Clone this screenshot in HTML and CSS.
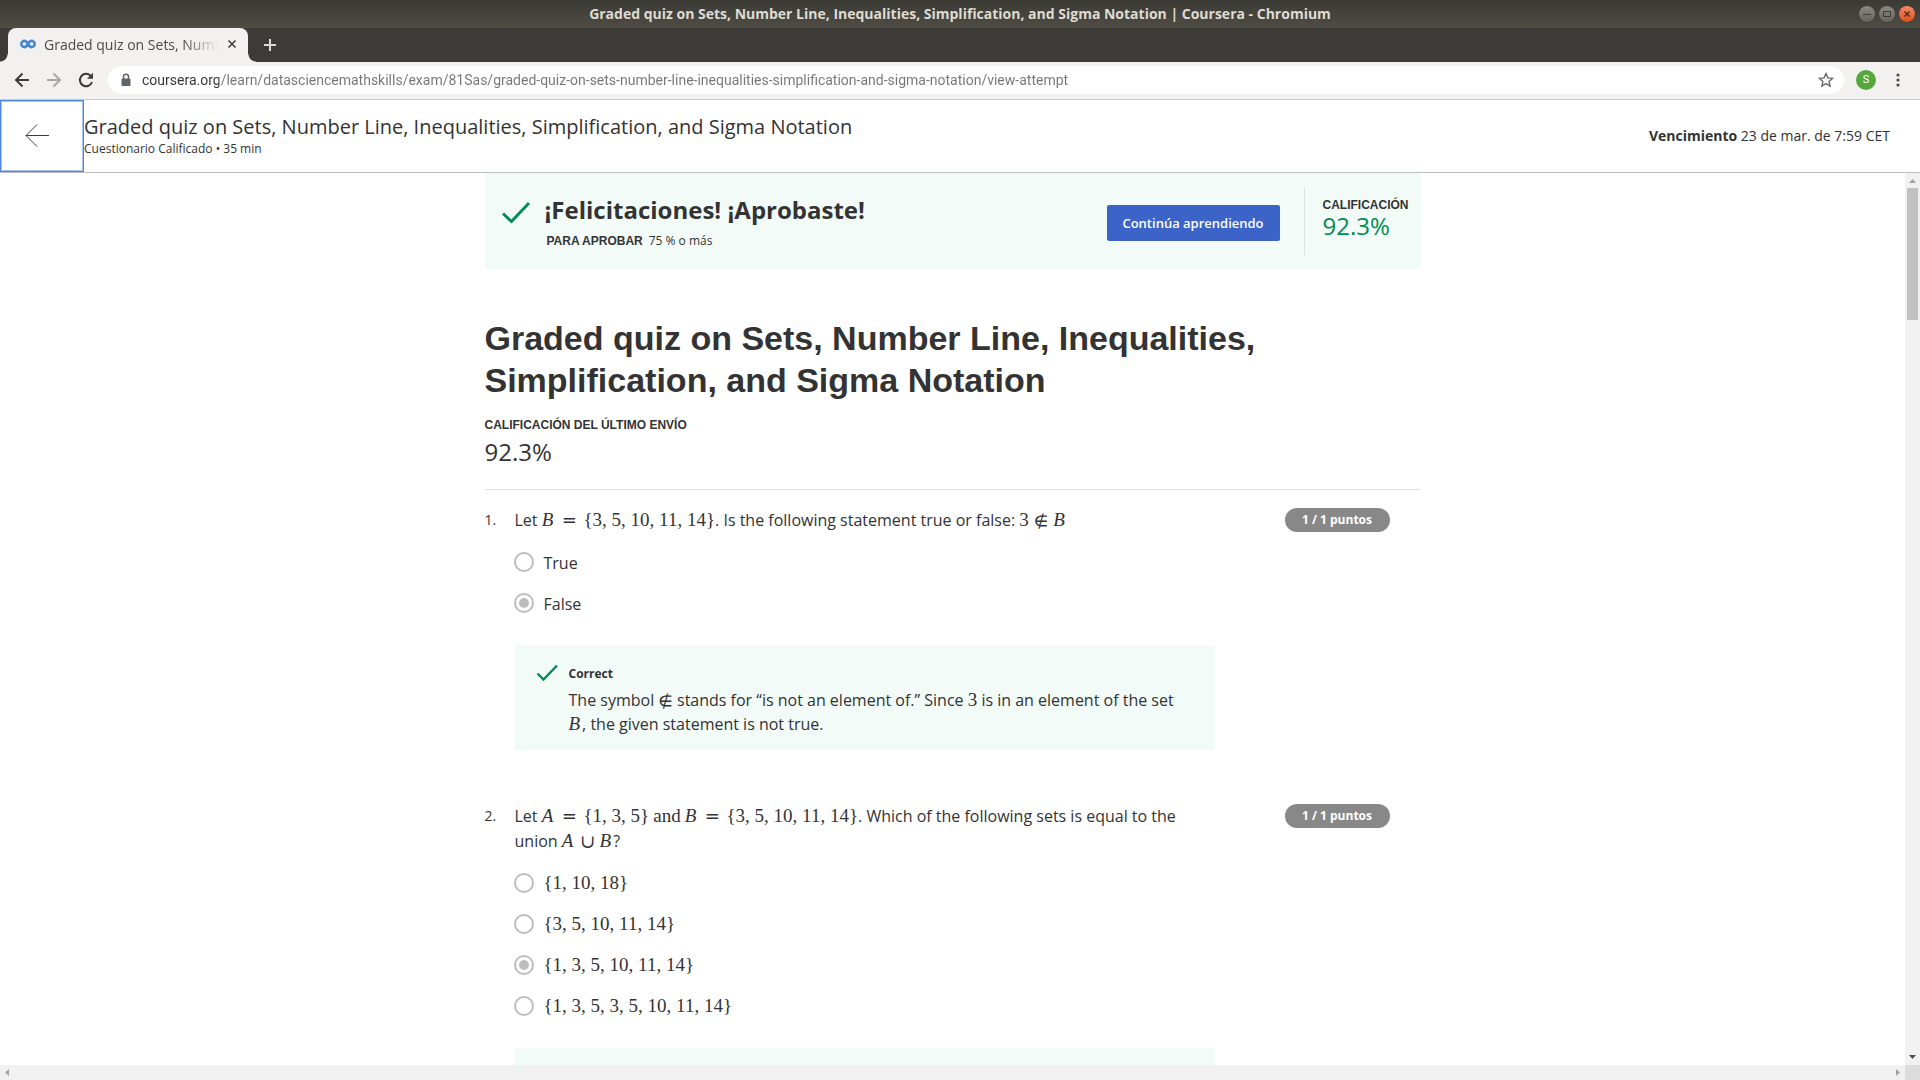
FILE: index.html
```html
<!DOCTYPE html>
<html lang="es">
<head>
<meta charset="utf-8">
<title>Graded quiz on Sets, Number Line, Inequalities, Simplification, and Sigma Notation | Coursera</title>
<link rel="stylesheet" href="styles.css">
</head>
<body>
<div class="titlebar">
  <span class="window-title">Graded quiz on Sets, Number Line, Inequalities, Simplification, and Sigma Notation | Coursera - Chromium</span>
  <div class="window-buttons">
    <button class="wbtn" aria-label="Minimize"><svg width="16" height="16" viewBox="0 0 16 16"><path d="M4 8.5h8" stroke="#3c3b37" fill="none"/></svg></button>
    <button class="wbtn" aria-label="Maximize"><svg width="16" height="16" viewBox="0 0 16 16"><path d="M4.500 5.500h7v5h-7z" stroke="#3c3b37" fill="none"/></svg></button>
    <button class="wbtn wbtn-close" aria-label="Close"><svg width="16" height="16" viewBox="0 0 16 16"><path d="M5.500 5.500l5 5m0-5l-5 5" stroke="#4a2a1a" stroke-width="1.400" fill="none"/></svg></button>
  </div>
</div>
<div class="tabstrip">
  <div class="tab">
    <svg class="favicon" width="16" height="16" viewBox="0 0 16 16" fill="none" stroke="#4a86cf" stroke-width="2.600"><path d="M8 8C6.900 6 5.800 4.900 4.400 4.900a3.100 3.100 0 0 0 0 6.200C5.800 11.100 6.900 10 8 8s2.200-3.100 3.600-3.100a3.100 3.100 0 0 1 0 6.200C10.200 11.100 9.100 10 8 8z"/></svg>
    <span class="tab-title">Graded quiz on Sets, Number Line</span>
    <button class="tab-close" aria-label="Close tab"><svg width="12" height="12" viewBox="0 0 12 12"><path d="M2.500 2.500l7 7m0-7l-7 7" stroke="#3c4043" stroke-width="1.600" fill="none"/></svg></button>
  </div>
  <button class="new-tab" aria-label="New tab"><svg width="14" height="14" viewBox="0 0 14 14"><path d="M7 1v12M1 7h12" stroke="#dfdbd2" stroke-width="2" fill="none"/></svg></button>
</div>
<div class="toolbar">
  <button class="nav" aria-label="Back"><svg width="16" height="16" viewBox="0 0 16 16" fill="none" stroke="#3c3c3c" stroke-width="2"><path d="M15 8H2.500M8.500 1.500L2 8l6.500 6.500"/></svg></button>
  <button class="nav" aria-label="Forward"><svg width="16" height="16" viewBox="0 0 16 16" fill="none" stroke="#a9a8a6" stroke-width="2"><path d="M1 8h12.500M7.500 1.500L14 8l-6.500 6.500"/></svg></button>
  <button class="nav" aria-label="Reload"><svg width="16" height="16" viewBox="0 0 16 16" fill="none" stroke="#3c3c3c" stroke-width="2"><path d="M14 10a6.200 6.200 0 1 1-1.500-6.400L14 5"/><path d="M15 .8v6H9z" fill="#3c3c3c" stroke="none"/></svg></button>
  <div class="omnibox">
    <svg width="12" height="14" viewBox="0 0 12 14"><path d="M3.500 6V3.800a2.500 2.500 0 0 1 5 0V6" stroke="#5f6368" stroke-width="1.500" fill="none"/><rect x="1.500" y="5.500" width="9" height="7.500" rx="1" fill="#5f6368"/></svg>
    <input class="url" type="text" aria-label="Address" value="coursera.org/learn/datasciencemathskills/exam/81Sas/graded-quiz-on-sets-number-line-inequalities-simplification-and-sigma-notation/view-attempt">
    <svg width="16" height="16" viewBox="0 0 16 16"><path d="M8 1.600l1.900 4.300 4.700.4-3.500 3.100 1 4.600L8 11.600 3.900 14l1-4.600L1.400 6.300l4.700-.4z" stroke="#6b6b6b" stroke-width="1.400" fill="none"/></svg>
  </div>
  <button class="avatar" aria-label="Profile">S</button>
  <button class="menu" aria-label="Menu"><svg width="4" height="16" viewBox="0 0 4 16" fill="#4a4a4a"><circle cx="2" cy="3" r="1.600"/><circle cx="2" cy="8" r="1.600"/><circle cx="2" cy="13" r="1.600"/></svg></button>
</div>
<header class="quiz-header">
  <button class="back" aria-label="Volver"><svg width="24" height="24" viewBox="0 0 24 24" fill="none" stroke="#3a3a48" stroke-width="1"><path d="M24 11.500H1M12 .5L1 11.500l11 11"/></svg></button>
  <div class="quiz-name">
    <div class="quiz-title">Graded quiz on Sets, Number Line, Inequalities, Simplification, and Sigma Notation</div>
    <div class="quiz-sub">Cuestionario Calificado • 35 min</div>
  </div>
  <div class="due"><b>Vencimiento</b> 23 de mar. de 7:59 CET</div>
</header>
<div class="scroller">
  <main class="view">
    <div class="page">
      <section class="banner">
        <svg class="banner-check" width="30" height="24" viewBox="0 0 30 24" fill="none" stroke="#008c53" stroke-width="3"><path d="M2 12.500l8.500 8L28 2"/></svg>
        <div class="banner-text">
          <div class="congrats">¡Felicitaciones! ¡Aprobaste!</div>
          <div class="to-pass"><span class="caps">PARA APROBAR</span><span>75 % o más</span></div>
        </div>
        <button class="continue">Continúa aprendiendo</button>
        <div class="grade"><div class="caps">CALIFICACIÓN</div><div class="score pass">92.3%</div></div>
      </section>
      <h1>Graded quiz on Sets, Number Line, Inequalities, Simplification, and Sigma Notation</h1>
      <div class="caps">CALIFICACIÓN DEL ÚLTIMO ENVÍO</div>
      <div class="score last">92.3%</div>
      <section class="question first">
        <div class="num">1.</div>
        <div class="body">
          <p class="prompt">Let <span class="m"><i>B</i><span class="rel">=</span>{3, 5, 10, 11, 14}</span>. Is the following statement true or false: <span class="m">3<span class="sym">∉</span><i>B</i></span></p>
          <label class="option"><input type="radio" name="q1" disabled><span class="txt">True</span></label>
          <label class="option"><input type="radio" name="q1" disabled checked><span class="txt">False</span></label>
          <div class="feedback">
            <svg width="22" height="18" viewBox="0 0 22 18" fill="none" stroke="#008c53" stroke-width="2.400"><path d="M1.500 9.500l6 6L21 1.500"/></svg>
            <div>
              <div class="verdict">Correct</div>
              <p class="why">The symbol <span class="m"><span class="sym lone">∉</span></span> stands for “is not an element of.” Since <span class="m">3</span> is in an element of the set <span class="m"><i>B</i></span>, the given statement is not true.</p>
            </div>
          </div>
        </div>
        <div class="points">1 / 1 puntos</div>
      </section>
      <section class="question">
        <div class="num">2.</div>
        <div class="body">
          <p class="prompt">Let <span class="m"><i>A</i><span class="rel">=</span>{1, 3, 5}<span class="word">and</span><i>B</i><span class="rel">=</span>{3, 5, 10, 11, 14}</span>. Which of the following sets is equal to the union <span class="m"><i>A</i><span class="sym">∪</span><i>B</i></span>?</p>
          <label class="option"><input type="radio" name="q2" disabled><span class="m">{1, 10, 18}</span></label>
          <label class="option"><input type="radio" name="q2" disabled><span class="m">{3, 5, 10, 11, 14}</span></label>
          <label class="option"><input type="radio" name="q2" disabled checked><span class="m">{1, 3, 5, 10, 11, 14}</span></label>
          <label class="option"><input type="radio" name="q2" disabled><span class="m">{1, 3, 5, 3, 5, 10, 11, 14}</span></label>
          <div class="feedback"></div>
        </div>
        <div class="points">1 / 1 puntos</div>
      </section>
    </div>
  </main>
  <div class="vbar">
    <svg width="15" height="15" viewBox="0 0 15 15"><path d="M4 10l3.500-4 3.500 4z" fill="#a3a3a3"/></svg>
    <div class="thumb"></div>
    <svg class="down" width="15" height="15" viewBox="0 0 15 15"><path d="M4 5h7L7.500 9z" fill="#505050"/></svg>
  </div>
  <div class="hbar">
    <svg width="15" height="15" viewBox="0 0 15 15"><path d="M9 4v7L5 7.500z" fill="#a3a3a3"/></svg>
    <svg width="15" height="15" viewBox="0 0 15 15"><path d="M6 4v7l4-3.500z" fill="#a3a3a3"/></svg>
  </div>
  <div class="corner"></div>
</div>
</body>
</html>
```
FILE: styles.css
```css
* { box-sizing: border-box; }
body {
  margin: 0;
  height: 100vh;
  display: flex;
  flex-direction: column;
  overflow: hidden;
  background: #fff;
  color: #333;
  font-family: "Open Sans", sans-serif;
  font-size: 16px;
}
button { border: 0; padding: 0; margin: 0; background: none; font: inherit; color: inherit; display: grid; place-items: center; }
svg { display: block; flex: none; }
p, h1 { margin: 0; }

.titlebar {
  flex: none;
  height: 28px;
  display: grid;
  grid-template-columns: 1fr auto 1fr;
  align-items: center;
  padding: 0 5px;
  background: linear-gradient(#3b3a35, #4e4c44);
  color: #dfdbd2;
}
.window-title { grid-column: 2; font: bold 14px/20px "Open Sans", sans-serif; }
.window-buttons { display: flex; gap: 4px; justify-content: flex-end; }
.wbtn { width: 16px; height: 16px; border-radius: 50%; background: linear-gradient(#8a8880, #66645d); box-shadow: 0 0 1px #222; }
.wbtn-close { background: linear-gradient(#f58a68, #df4f1b); }

.tabstrip { flex: none; height: 34px; display: flex; align-items: stretch; padding-left: 8px; background: #3d3b37; }
.tab {
  position: relative;
  width: 240px;
  display: flex;
  align-items: center;
  padding: 0 10px 2px 12px;
  background: #f2f1ef;
  border-radius: 8px 8px 0 0;
}
/* curved feet that join the tab to the toolbar */
.tab::before, .tab::after { content: ""; position: absolute; bottom: 0; width: 8px; height: 8px; }
.tab::before { right: 100%; background: radial-gradient(circle at 0 0, transparent 7px, #f2f1ef 8px); }
.tab::after { left: 100%; background: radial-gradient(circle at 100% 0, transparent 7px, #f2f1ef 8px); }
.tab-title {
  flex: 1;
  margin: 0 8px;
  overflow: hidden;
  white-space: nowrap;
  font-size: 14px;
  color: #4a4a4a;
  -webkit-mask-image: linear-gradient(90deg, #000 80%, transparent);
  mask-image: linear-gradient(90deg, #000 80%, transparent);
}
.new-tab { width: 28px; margin-left: 8px; }

.toolbar {
  flex: none;
  height: 38px;
  display: flex;
  align-items: center;
  padding: 0 20px 2px 14px;
  background: #f2f1ef;
  border-bottom: 1px solid #cdcac3;
}
.nav { width: 16px; margin-right: 16px; }
.omnibox {
  flex: 1;
  height: 28px;
  display: flex;
  align-items: center;
  gap: 8px;
  margin-right: 12px;
  margin-left: -2px;
  padding: 0 10px 0 12px;
  border-radius: 14px;
  background: #fff;
}
.url {
  flex: 1;
  border: 0;
  padding: 0 2px;
  outline: 0;
  font: 14px/20px Roboto, sans-serif;
  color: transparent;
  background: linear-gradient(90deg, #333 79px, #757575 79px);
  -webkit-background-clip: text;
  background-clip: text;
}
.avatar { width: 20px; height: 20px; border-radius: 50%; background: #56a73f; color: #fff; font: 11px/20px Roboto, sans-serif; }
.menu { margin-left: 20px; width: 4px; }

.quiz-header { flex: none; height: 73px; display: flex; align-items: center; border-bottom: 1px solid #bdbdbd; padding-right: 30px; }
.back { width: 84px; height: 72px; padding-right: 10px; border: 1px solid #4f86dd; box-shadow: inset 0 0 0 1px #a9c6f3; }
.quiz-name { flex: 1; }
.quiz-title { font-size: 20px; line-height: 26px; }
.quiz-sub { font-size: 12px; line-height: 18px; }
.due { padding-bottom: 2px; font-size: 14px; }

.scroller { flex: 1; min-height: 0; display: grid; grid-template: minmax(0, 1fr) 15px / minmax(0, 1fr) 15px; }
.view { overflow: hidden; }
.page { max-width: 936px; margin: 0 auto; }
.banner { height: 96px; display: flex; align-items: center; background: #f2fbf8; padding: 0 12px 0 16px; }
.banner-check { align-self: flex-start; margin-top: 28px; }
.banner-text { flex: 1; margin-left: 14px; padding-top: 3px; }
.congrats { font-size: 24px; line-height: 32px; font-weight: bold; }
.to-pass { display: flex; gap: 6px; padding: 5px 2px 0; font-size: 12px; line-height: 20px; }
.caps { font: bold 12px/20px "Liberation Sans", sans-serif; }
.continue { width: 173px; height: 36px; margin-top: 4px; border-radius: 2px; background: #3c64c8; color: #fff; font-size: 13px; font-weight: 600; }
.grade { height: 68px; margin-left: 24px; padding: 8px 0 0 18px; border-left: 1px solid #dfe1e0; }
.score { font-size: 24px; line-height: 22px; }
.pass { color: #008c53; }
h1 { margin: 48px 0 14px; font: bold 34px/42px "Liberation Sans", sans-serif; }
.last { margin: 6px 0 26px; }

.question { display: flex; align-items: flex-start; padding-top: 18px; }
.first { border-top: 1px solid #dfdfdf; margin-bottom: 36px; }
.num { width: 30px; font-size: 14px; line-height: 24px; }
.body { width: 700px; }
.prompt { padding-right: 32px; line-height: 25px; margin-bottom: 8px; }
.option { display: flex; align-items: center; height: 41px; }
.option input {
  appearance: none;
  width: 20px;
  height: 20px;
  margin: 0 10px 0 -1px;
  border: 2px solid #bdbdbd;
  border-radius: 50%;
  display: grid;
  place-items: center;
}
.option input:checked::before { content: ""; width: 10px; height: 10px; border-radius: 50%; background: #bdbdbd; }
.txt { padding-top: 2px; }
.feedback { display: flex; gap: 11px; margin-top: 22px; min-height: 105px; padding: 19px 32px 14px 21px; background: #f2fbf8; }
.verdict { font-size: 12px; line-height: 20px; font-weight: bold; }
.why { line-height: 24px; padding-top: 4px; }
.points { margin-left: 70px; width: 105px; border-radius: 12px; background: #888; color: #fff; font-size: 12px; line-height: 24px; font-weight: bold; text-align: center; }

.m { font-family: "Liberation Serif", "DejaVu Serif", serif; font-size: 19px; line-height: 20px; white-space: nowrap; }
.m i { margin-right: 2px; }
.rel, .sym { font-family: "DejaVu Math TeX Gyre", "DejaVu Serif", serif; font-size: 18px; }
.rel { margin: 0 7px; }
.sym { margin: 0 5px; }
.lone { margin: 0; }
.word { margin: 0 4px; }

.vbar { display: flex; flex-direction: column; background: #f1f1f1; }
.thumb { width: 11px; height: 132px; margin: 0 2px; background: #c1c1c1; }
.down { margin-top: auto; }
.hbar { display: flex; justify-content: space-between; background: #f1f1f1; }
.corner { background: #dcdcdc; }
```
